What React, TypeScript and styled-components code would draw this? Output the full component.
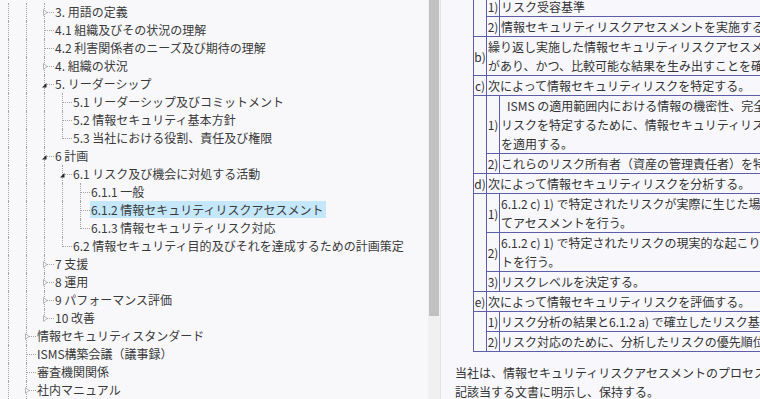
import React from "react";
import styled, { createGlobalStyle } from "styled-components";

type Glyph = "open" | "closed";

type Node = {
	label: string;
	depth: number;
	glyph?: Glyph;
	selected?: boolean;
};

const nodes: Node[] = [
	{ label: "3. 用語の定義", depth: 3, glyph: "closed" },
	{ label: "4.1 組織及びその状況の理解", depth: 3 },
	{ label: "4.2 利害関係者のニーズ及び期待の理解", depth: 3 },
	{ label: "4. 組織の状況", depth: 3, glyph: "closed" },
	{ label: "5. リーダーシップ", depth: 3, glyph: "open" },
	{ label: "5.1 リーダーシップ及びコミットメント", depth: 4 },
	{ label: "5.2 情報セキュリティ基本方針", depth: 4 },
	{ label: "5.3 当社における役割、責任及び権限", depth: 4 },
	{ label: "6 計画", depth: 3, glyph: "open" },
	{ label: "6.1 リスク及び機会に対処する活動", depth: 4, glyph: "open" },
	{ label: "6.1.1 一般", depth: 5 },
	{ label: "6.1.2 情報セキュリティリスクアセスメント", depth: 5, selected: true },
	{ label: "6.1.3 情報セキュリティリスク対応", depth: 5 },
	{ label: "6.2 情報セキュリティ目的及びそれを達成するための計画策定", depth: 4 },
	{ label: "7 支援", depth: 3, glyph: "closed" },
	{ label: "8 運用", depth: 3, glyph: "closed" },
	{ label: "9 パフォーマンス評価", depth: 3, glyph: "closed" },
	{ label: "10 改善", depth: 3, glyph: "closed" },
	{ label: "情報セキュリティスタンダード", depth: 2, glyph: "closed" },
	{ label: "ISMS構築会議（議事録）", depth: 2 },
	{ label: "審査機関関係", depth: 2 },
	{ label: "社内マニュアル", depth: 2, glyph: "closed" },
];

// rows further down the tree, off screen, keep the outer lines going
const hidden = [{ depth: 2 }, { depth: 1 }];
const all = [...nodes, ...hidden];

// does the line of column `col` (joining nodes of depth col + 1) go on below row `r`?
function continues(r: number, col: number) {
	const level = col + 1;
	for (let i = r + 1; i < all.length; i++) {
		if (all[i].depth < level) return false;
		if (all[i].depth === level) return true;
	}
	return false;
}

const GlobalStyle = createGlobalStyle`
	html, body {
		margin: 0;
		padding: 0;
		overflow: hidden;
	}
	body {
		font-family: "Noto Sans CJK JP", "Noto Sans", sans-serif;
		color: #333;
	}
`;

const Frame = styled.div`
	display: flex;
	width: 760px;
	height: 399px;
	overflow: hidden;
`;

const TreePane = styled.div`
	flex: 0 0 428px;
	padding-top: 3px;
	background: #f8f8fa;
	overflow: hidden;
`;

const ScrollTrack = styled.div`
	flex: 0 0 13px;
	display: flex;
	flex-direction: column;
	background: #f0f0f0;
	border-right: 1px solid #e4e4e8;
	box-sizing: border-box;
`;

const ScrollThumb = styled.div`
	height: 316px;
	width: 10px;
	margin-left: 1px;
	background: #c1c1c1;
`;

const Row = styled.div`
	display: flex;
	height: 18px;
`;

const Guide = styled.span<{ $line: "none" | "full" | "half"; $branch?: boolean }>`
	position: relative;
	flex: 0 0 18px;
	height: 18px;

	&::before {
		content: "";
		display: ${(p) => (p.$line === "none" ? "none" : "block")};
		position: absolute;
		left: 8px;
		top: 0;
		height: ${(p) => (p.$line === "half" ? "10px" : "18px")};
		border-left: 1px dotted #a3a3a3;
	}

	&::after {
		content: "";
		display: ${(p) => (p.$branch ? "block" : "none")};
		position: absolute;
		left: 9px;
		top: 9px;
		width: 9px;
		border-top: 1px dotted #a3a3a3;
	}
`;

const Expander = styled.svg<{ $open: boolean }>`
	position: absolute;
	z-index: 1;
	left: ${(p) => (p.$open ? "6px" : "7px")};
	top: ${(p) => (p.$open ? "8px" : "6px")};
`;

const Label = styled.span<{ $selected?: boolean }>`
	align-self: flex-start;
	height: 17px;
	line-height: 17px;
	padding: 0 3px 0 1px;
	font-size: 12px;
	white-space: nowrap;
	color: #3a3a3a;
	background: ${(p) => (p.$selected ? "#c4e7fa" : "transparent")};
`;

const ContentPane = styled.div`
	flex: 1;
	min-width: 0;
	padding-left: 14px;
	background: #f8f8fc;
	overflow: hidden;
	font-size: 12px;
	color: #333;
`;

const Clause = styled.table`
	margin: -24px 0 0 18px;
	border-collapse: collapse;
	table-layout: fixed;
	width: 460px;

	td {
		border: 1px solid #5d5da8;
		padding: 0 1px;
		line-height: 19px;
		white-space: pre;
		vertical-align: middle;
	}
`;

const Mark = styled.td`
	text-align: center;
	padding: 0 !important;
`;

const Para = styled.p`
	margin: 11px 0 0;
	line-height: 19px;
	white-space: pre;
`;

function TreeRow({ node, index }: { node: Node; index: number }) {
	const cols = [];
	for (let c = 0; c < node.depth; c++) {
		const branchCol = c === node.depth - 1;
		const goesOn = continues(index, c);
		let line: "none" | "full" | "half" = goesOn ? "full" : "none";
		if (branchCol && !goesOn) line = "half";
		cols.push(
			<Guide key={c} $line={line} $branch={branchCol}>
				{branchCol && node.glyph === "open" && (
					<Expander $open width="5" height="5" viewBox="0 0 5 5">
						<polygon points="4.5,0 4.5,4.5 0,4.5" fill="#262626" />
					</Expander>
				)}
				{branchCol && node.glyph === "closed" && (
					<Expander $open={false} width="5" height="7" viewBox="0 0 5 7">
						<polygon
							points="0.5,0.5 4,3.5 0.5,6.5"
							fill="#f8f8fa"
							stroke="#b4b4b4"
							strokeWidth="1"
						/>
					</Expander>
				)}
			</Guide>
		);
	}
	// the label takes the place of the last guide column
	return (
		<Row>
			{cols}
			<Label $selected={node.selected}>{node.label}</Label>
		</Row>
	);
}

function App() {
	return (
		<>
			<GlobalStyle />
			<Frame>
				<TreePane>
					{nodes.map((n, i) => (
						<TreeRow key={i} node={n} index={i} />
					))}
				</TreePane>
				<ScrollTrack>
					<ScrollThumb />
				</ScrollTrack>
				<ContentPane>
					<Clause>
						<colgroup>
							<col style={{ width: 13 }} />
							<col style={{ width: 13 }} />
							<col />
						</colgroup>
						<tbody>
							<tr>
								<Mark>a)</Mark>
								<td colSpan={2}>次を含む情報セキュリティのリスク基準を確立し、維持する。</td>
							</tr>
							<tr>
								<td rowSpan={2} />
								<Mark>1)</Mark>
								<td>リスク受容基準</td>
							</tr>
							<tr>
								<Mark>2)</Mark>
								<td>情報セキュリティリスクアセスメントを実施するための基準</td>
							</tr>
							<tr>
								<Mark>b)</Mark>
								<td colSpan={2}>
									{"繰り返し実施した情報セキュリティリスクアセスメントが、一貫性及び妥当性\nがあり、かつ、比較可能な結果を生み出すことを確実にする。"}
								</td>
							</tr>
							<tr>
								<Mark>c)</Mark>
								<td colSpan={2}>次によって情報セキュリティリスクを特定する。</td>
							</tr>
							<tr>
								<td rowSpan={2} />
								<Mark>1)</Mark>
								<td>
									{"\u2002ISMS の適用範囲内における情報の機密性、完全性及び可用性の喪失に伴う\nリスクを特定するために、情報セキュリティリスクアセスメントのプロセス\nを適用する。"}
								</td>
							</tr>
							<tr>
								<Mark>2)</Mark>
								<td>これらのリスク所有者（資産の管理責任者）を特定する。</td>
							</tr>
							<tr>
								<Mark>d)</Mark>
								<td colSpan={2}>次によって情報セキュリティリスクを分析する。</td>
							</tr>
							<tr>
								<td rowSpan={3} />
								<Mark>1)</Mark>
								<td>
									{"6.1.2 c) 1) で特定されたリスクが実際に生じた場合に起こり得る結果につい\nてアセスメントを行う。"}
								</td>
							</tr>
							<tr>
								<Mark>2)</Mark>
								<td>
									{"6.1.2 c) 1) で特定されたリスクの現実的な起こりやすさについてアセスメン\nトを行う。"}
								</td>
							</tr>
							<tr>
								<Mark>3)</Mark>
								<td>リスクレベルを決定する。</td>
							</tr>
							<tr>
								<Mark>e)</Mark>
								<td colSpan={2}>次によって情報セキュリティリスクを評価する。</td>
							</tr>
							<tr>
								<td rowSpan={2} />
								<Mark>1)</Mark>
								<td>リスク分析の結果と6.1.2 a) で確立したリスク基準とを比較する。</td>
							</tr>
							<tr>
								<Mark>2)</Mark>
								<td>リスク対応のために、分析したリスクの優先順位付けを行う。</td>
							</tr>
						</tbody>
					</Clause>
					<Para>
						{"当社は、情報セキュリティリスクアセスメントのプロセスについての文書化した情報を下\n記該当する文書に明示し、保持する。"}
					</Para>
				</ContentPane>
			</Frame>
		</>
	);
}

export default App;
